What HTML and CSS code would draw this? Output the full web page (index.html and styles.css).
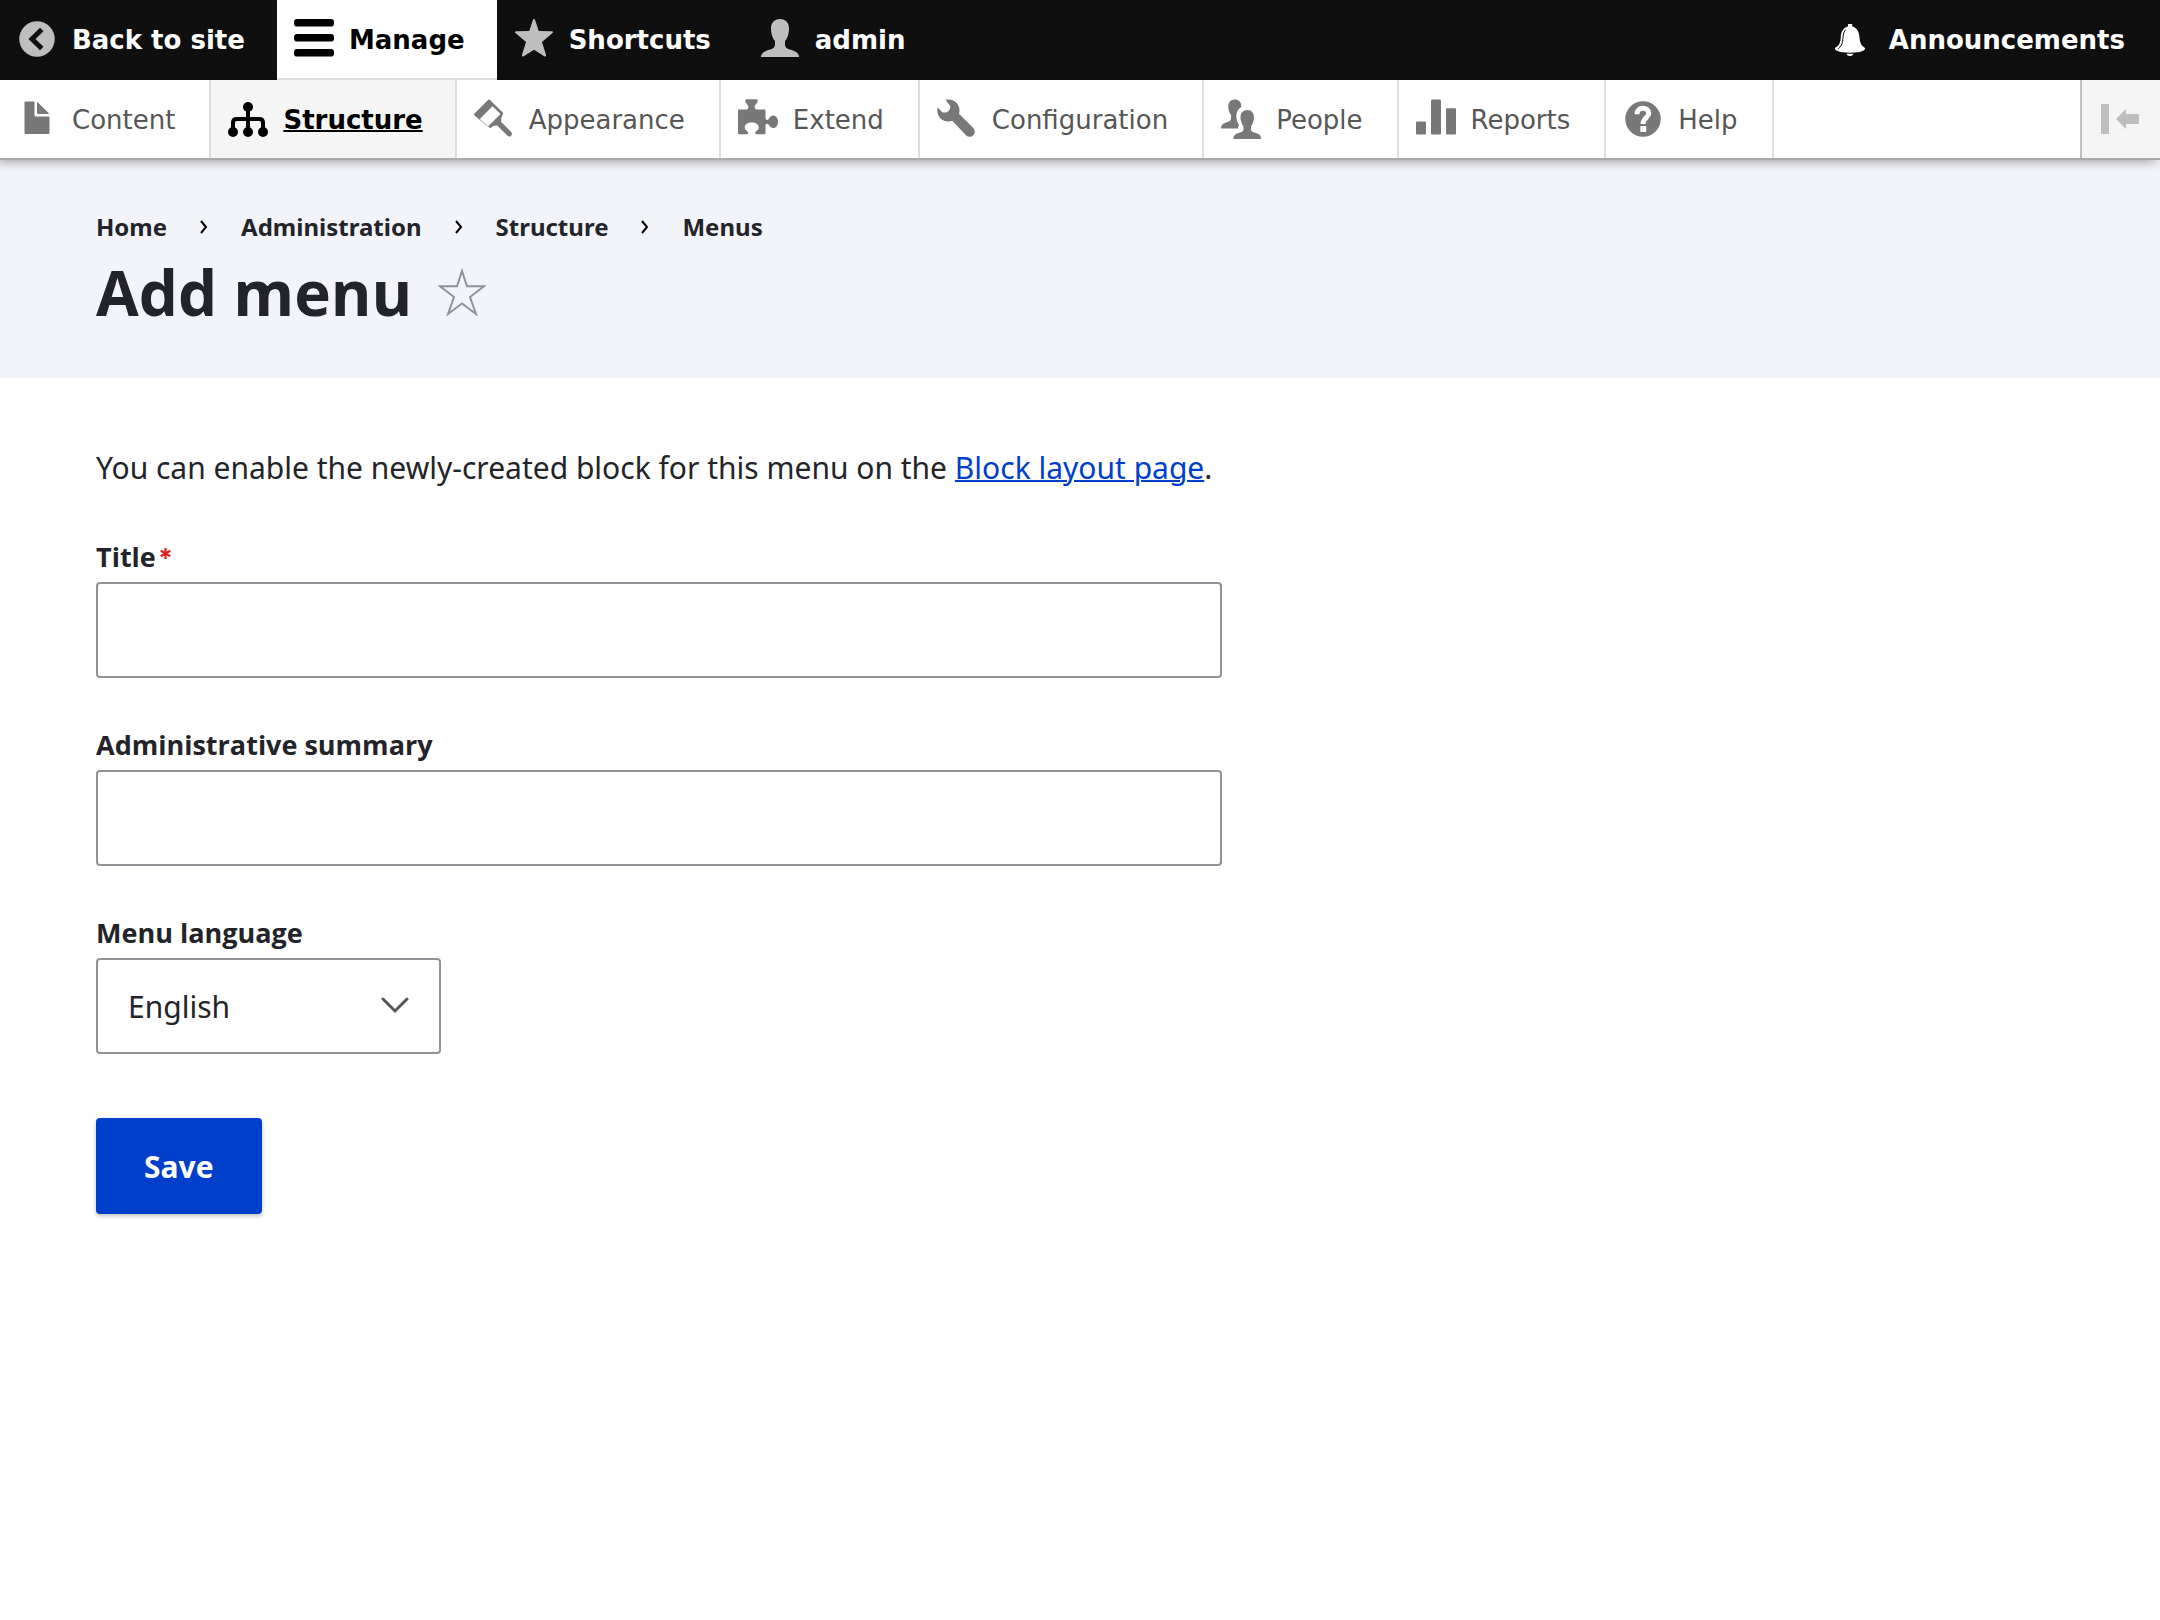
FILE: index.html
```html
<!DOCTYPE html>
<html lang="en">
<head>
<meta charset="utf-8">
<title>Add menu</title>
<link rel="stylesheet" href="styles.css">
</head>
<body>
<header class="toolbar">
  <nav class="bar" aria-label="Toolbar">
    <a class="tab" href="#"><svg class="icon" viewBox="0 0 16 16"><circle cx="8" cy="8" r="7.1"/><path class="cut" d="M9.9 4.2L6 8l3.9 3.8"/></svg>Back to site</a>
    <a class="tab tab-active" href="#"><svg class="icon" viewBox="0 0 16 16"><rect width="16" height="3" rx="1.25"/><rect y="6" width="16" height="3" rx="1.25"/><rect y="12" width="16" height="3" rx="1.25"/></svg>Manage</a>
    <a class="tab" href="#"><svg class="icon" viewBox="0 0 16 16"><path d="M7.6.3q.4-.7.8 0L9.9 4.8l5.2.1q.9.1.3.7L11.2 9.2l1.6 5.1q.1.9-.7.6L8 12.3l-4.100 2.600q-.8.3-.7-.6L4.800 9.200.600 5.600q-.6-.6.3-.7l5.200-.1z"/></svg>Shortcuts</a>
    <a class="tab" href="#"><svg class="icon" viewBox="0 0 16 16"><path d="M8 0c2.300 0 3.700 1.600 3.600 4 0 1.800-.6 3.700-1.600 4.900v1.300c0 1.100.7 1.600 1.900 2 2.200.6 3.700 1.400 3.700 3H.4c0-1.600 1.500-2.400 3.700-3 1.200-.4 1.900-.9 1.900-2V8.900C5 7.700 4.400 5.800 4.400 4 4.300 1.600 5.700 0 8 0z"/></svg>admin</a>
    <a class="tab tab-end" href="#"><svg class="icon" viewBox="0 0 16 16"><path d="M5.600 2h1.700v1c2 .5 2.700 2.200 2.900 4.300.2 2.500.8 3.400 2 4.100.4.300.3.800-.2 1.100-1.300.7-3.300 1-5.600 1s-4.300-.3-5.600-1c-.5-.3-.6-.8-.2-1.100C1.900 10.700 2.600 9.800 2.700 7.300 2.800 5.200 3.600 3.500 5.600 3zM5 13.900h2.800c-.2.600-.7.900-1.400.9s-1.200-.3-1.400-.9z"/><path class="cut hair" d="M4.600 4.300C3.500 5.600 3.700 7.200 3.400 9c-.2 1.300-.8 2.200-1.700 2.900"/></svg>Announcements</a>
  </nav>
  <nav class="tray" aria-label="Administration menu">
    <a class="item" href="#"><svg class="icon" viewBox="0 0 16 16"><path d="M12.502 7h-5c-.276 0-.502-.225-.502-.5v-5c0-.275-.225-.5-.5-.5h-3c-.275 0-.5.225-.5.5v12.029c0 .275.225.5.5.5h9.002c.275 0 .5-.225.5-.5V7.500c0-.275-.225-.5-.5-.5zM8.502 6h4c.275 0 .34-.159.146-.354L8.355 1.354C8.160 1.159 8.002 1.225 8.002 1.500v4c0 .275.225.5.5.5z"/></svg>Content</a>
    <a class="item item-active" href="#"><svg class="icon" viewBox="0 0 16 16"><circle cx="8" cy="3.200" r="2"/><circle cx="2" cy="13.200" r="2"/><circle cx="8" cy="13.200" r="2"/><circle cx="14" cy="13.200" r="2"/><path class="line" d="M8 3v10M2 13V9.500Q2 8 3.500 8h9Q14 8 14 9.500V13"/></svg><span>Structure</span></a>
    <a class="item" href="#"><svg class="icon" viewBox="0 0 16 16"><path fill-rule="evenodd" d="M5.600.4q.4-.4.8 0L11.500 5.400q.4.400 0 .8L11 7.400l-.2 1.700 4.100 4.100c.8 1.100-.4 2.400-1.500 1.500L9.300 10.600l-1.700.2-.7.600q-.4.300-.8 0L.2 6.600q-.4-.4 0-.8zM7.400 2.900L2.300 8l3.400 2.900L10.600 6z"/></svg>Appearance</a>
    <a class="item" href="#"><svg class="icon" viewBox="0 0 16 16"><path d="M3.400.1h4c.8.3.6 1.100 0 1.700-.6.6-.8 1-.7 1.700.1.500.4.700.9.700h3q.4 0 .4.400v3.200c.2.700.8.700 1.300.2.5-.9 1-1.400 1.800-1.400 1.100 0 1.900 1.100 1.900 2.500s-.8 2.500-1.900 2.500c-.8 0-1.300-.5-1.800-1.300-.5-.5-1.100-.5-1.300.2v3.200q0 .4-.4.400H7.500c-.7-.2-.8-.8-.2-1.200.7-.5 1-.9 1-1.500 0-1.300-1.200-2-2.800-2s-2.800.7-2.800 2c0 .6.300 1 1 1.500.6.400.5 1-.2 1.200H.4Q0 14.100 0 13.700V4.600q0-.4.400-.4h2.800c.5 0 .8-.2.900-.7.1-.7-.1-1.100-.7-1.700-.6-.6-.8-1.400 0-1.700z"/></svg>Extend</a>
    <a class="item" href="#"><svg class="icon" viewBox="0 0 16 16"><path d="M3.400.3c2.900-.7 5.600 1.300 5.600 4.100q0 .8-.2 1.500l5.700 5.700c1.800 2.200-1 4.700-2.900 2.900L6.100 8.700C3.200 9.700.2 7.800.1 4.600q0-.6.1-1.300l1.900 2c1.900.6 3.400-.7 3.200-2.500z"/></svg>Configuration</a>
    <a class="item" href="#"><svg class="icon" viewBox="0 0 16 16"><path d="M5.500.2c1.600 0 2.600 1 2.600 2.600v.5C6.600 4.100 6 5.700 6.200 7.600c.1 1.200.5 2 1 2.900l-.5 1.300H0c0-1.600.9-1.900 2.400-2.500 1.100-.4 1.600-.8 1.600-1.600V6.400C3.300 5.500 2.900 4.300 2.900 3 2.900 1.300 3.900.2 5.500.2z"/><path d="M10.500 4.400c1.700 0 2.700 1.200 2.700 3 0 1.400-.5 2.600-1.200 3.500v1.200c0 .8.600 1.100 1.700 1.400 1.600.5 2.300 1 2.300 2.500H5c0-1.500.7-2 2.300-2.500 1.100-.3 1.700-.6 1.700-1.400v-1.200c-.7-.9-1.200-2.100-1.200-3.500 0-1.800 1-3 2.700-3z"/></svg>People</a>
    <a class="item" href="#"><svg class="icon" viewBox="0 0 16 16"><rect y="9" width="4" height="5.200" rx=".4"/><rect x="6" y=".2" width="4" height="14" rx=".4"/><rect x="12" y="3.700" width="4" height="10.500" rx=".4"/></svg>Reports</a>
    <a class="item" href="#"><svg class="icon" viewBox="0 0 16 16"><circle cx="8" cy="8" r="7.100"/><path class="cut" d="M5.600 6.100C5.500 3 10.300 3 10.300 5.700 10.300 7.500 8 7.600 8 10"/><rect class="dot" x="6.900" y="10.800" width="2.400" height="2.400" rx=".4"/></svg>Help</a>
    <button class="toggle" type="button" aria-label="Vertical orientation"><svg class="icon" viewBox="0 0 40 40"><path d="M0 5h8v30H0zM15 20L25 10v5h12q1 0 1 1v8q0 1-1 1H25v5z"/></svg></button>
  </nav>
</header>
<section class="heading">
  <nav aria-label="Breadcrumb">
    <ol class="crumbs">
      <li><a href="#">Home</a></li>
      <li><svg class="sep" viewBox="0 0 8 14"><path d="M1 1l5 6-5 6"/></svg><a href="#">Administration</a></li>
      <li><svg class="sep" viewBox="0 0 8 14"><path d="M1 1l5 6-5 6"/></svg><a href="#">Structure</a></li>
      <li><svg class="sep" viewBox="0 0 8 14"><path d="M1 1l5 6-5 6"/></svg><a href="#">Menus</a></li>
    </ol>
  </nav>
  <div class="title-row">
    <h1>Add menu</h1>
    <a class="favorite" href="#" aria-label="Add to shortcuts"><svg viewBox="0 0 48 48"><path d="M24 3l5 15.300h17L32 29l6 17-14-10.500L10 46l6-17L2 18.300h17z"/></svg></a>
  </div>
</section>
<main class="content">
  <p class="intro">You can enable the newly-created block for this menu on the <a href="#">Block layout page</a>.</p>
  <form>
    <div class="field">
      <label for="menu-title">Title<svg class="required" viewBox="0 0 12 12"><path d="M6 0v12M.8 3l10.400 6M.8 9l10.400-6"/></svg></label>
      <input id="menu-title" type="text" required>
    </div>
    <div class="field">
      <label for="summary">Administrative summary</label>
      <input id="summary" type="text">
    </div>
    <div class="field">
      <label for="language">Menu language</label>
      <div class="select">
        <select id="language"><option>English</option></select>
        <svg class="chevron" viewBox="0 0 28 18"><path d="M2 2l12 12L26 2"/></svg>
      </div>
    </div>
    <button class="save" type="submit">Save</button>
  </form>
</main>
</body>
</html>
```

FILE: styles.css
```css
* { box-sizing: border-box; }

body {
  margin: 0;
  background: #fff;
  color: #232429;
  font: 30px/48px "Noto Sans", "Open Sans", sans-serif;
}

/* Toolbar */
.toolbar {
  position: relative;
  font: 26px/32px "DejaVu Sans", sans-serif;
}

.bar {
  display: flex;
  height: 80px;
  background: #0f0f0f;
}

.tab,
.item {
  display: flex;
  align-items: center;
  gap: 15px;
  padding: 0 34px 0 17px;
  text-decoration: none;
  white-space: nowrap;
}

.tab {
  padding-right: 32px;
  color: #fff;
  font-weight: 700;
  --cut: #0f0f0f;
}

.icon {
  flex: none;
  width: 40px;
  height: 40px;
  margin-bottom: 2px;
  fill: #bebebe;
}

.icon .cut {
  fill: none;
  stroke: var(--cut);
  stroke-width: 2;
}

.icon .hair { stroke-width: 0.4; }

.tab-active {
  padding-top: 2px;
  border-bottom: 2px solid #ddd;
  background: #fff;
  color: #000;
}

.tab-active .icon { fill: #000; }

.tab-end {
  margin-left: auto;
  padding-right: 35px;
}

.tab-end .icon { fill: #fff; }

.tray {
  display: flex;
  height: 80px;
  border-bottom: 2px solid #aaa;
  background: #fff;
  box-shadow: -4px 2px 10px rgba(0, 0, 0, 0.333);
}

.item {
  padding-top: 2px;
  border-right: 2px solid #ddd;
  color: #565656;
  --cut: #fff;
}

.item .icon { fill: #787878; }

.item .dot { fill: #fff; }

.item-active {
  padding-right: 32px;
  background: #f5f5f5;
  color: #000;
  font-weight: 700;
}

.item-active span {
  text-decoration: underline;
  text-decoration-thickness: 2px;
}

.item-active .icon { fill: #000; }

.item-active .line {
  fill: none;
  stroke: #000;
  stroke-width: 1.6;
}

.toggle {
  display: flex;
  align-items: center;
  justify-content: center;
  width: 80px;
  margin-left: auto;
  padding: 2px 0 0;
  border: 0;
  border-left: 2px solid #bfbfbf;
  background: #f5f5f5;
}

/* Page heading */
.heading {
  padding: 49px 96px 46px;
  background: #f3f4f9;
}

.crumbs {
  display: flex;
  margin: 0 0 7px;
  padding: 0;
  list-style: none;
  font-size: 24px;
  font-weight: 700;
  line-height: 36px;
}

.crumbs li {
  display: flex;
  align-items: center;
}

.crumbs a {
  color: inherit;
  text-decoration: none;
}

.sep {
  width: 8px;
  height: 14px;
  margin: 0 33px;
  fill: none;
  stroke: #000;
  stroke-width: 2;
}

.title-row {
  display: flex;
  align-items: center;
  gap: 26px;
}

h1 {
  margin: 0;
  font-family: "Open Sans", sans-serif;
  font-size: 62px;
  font-weight: 700;
  line-height: 80px;
}

.favorite svg {
  display: block;
  width: 48px;
  height: 48px;
  fill: none;
  stroke: #919297;
  stroke-width: 2;
}

/* Form */
.content { padding: 66px 96px; }

.intro { margin: 0 0 47px; }

.intro a {
  color: #003ecc;
  text-decoration-thickness: 2px;
}

.field { margin-bottom: 49px; }

.field:last-of-type { margin-bottom: 0; }

label {
  display: flex;
  margin-bottom: 7px;
  font-family: "Open Sans", sans-serif;
  font-size: 27px;
  font-weight: 700;
  line-height: 36px;
}

.required {
  width: 11px;
  height: 11px;
  margin: 9px 0 0 4px;
  fill: none;
  stroke: #dc2323;
  stroke-width: 2.4;
}

input,
select {
  display: block;
  height: 96px;
  padding: 2px 30px 0;
  border: 2px solid #919297;
  border-radius: 4px;
  background: #fff;
  color: inherit;
  font: inherit;
}

input {
  width: 100%;
  max-width: 1126px;
}

.select {
  position: relative;
  width: 345px;
}

select {
  width: 100%;
  appearance: none;
}

.chevron {
  position: absolute;
  top: 39px;
  right: 32px;
  width: 28px;
  height: 18px;
  fill: none;
  stroke: #55565b;
  stroke-width: 3;
  stroke-linecap: round;
  pointer-events: none;
}

.save {
  display: block;
  height: 96px;
  margin-top: 64px;
  padding: 2px 48px 0;
  border: 0;
  border-radius: 4px;
  background: #003ecc;
  box-shadow: 0 2px 4px rgba(0, 0, 0, 0.25);
  color: #fff;
  font: inherit;
  font-weight: 700;
}
```
